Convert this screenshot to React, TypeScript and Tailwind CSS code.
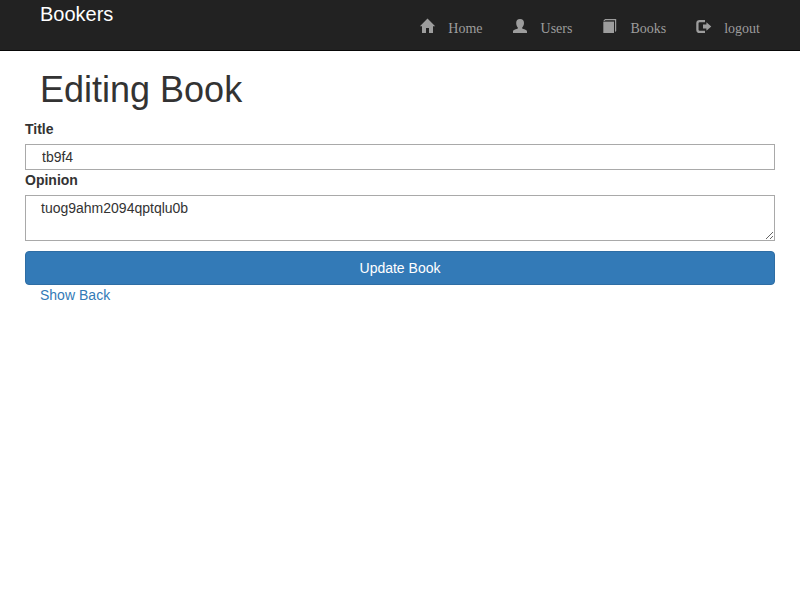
import type { ReactNode } from "react";

const links: { label: string; icon: ReactNode }[] = [
  {
    label: "Home",
    icon: <path d="M7.5 0.4 L15.2 8.2 H13 V15 H9 V10 H6 V15 H2 V8.2 H-0.1 Z" />,
  },
  {
    label: "Users",
    icon: (
      <path d="M7 1 C9.7 1 11 2.5 11 5 C11 7 10 8.6 9.2 9.4 V10.6 C10.4 11.2 14 12 14 13.4 V15 H0 V13.4 C0 12 3.6 11.2 4.8 10.6 V9.4 C4 8.6 3.2 7 3.2 5 C3.2 2.5 4.4 1 7 1 Z" />
    ),
  },
  {
    label: "Books",
    icon: (
      <>
        <path d="M1.3 3.6 H12 V15 H1.3 Z" />
        <path d="M1.3 3 L3 1 H14.2 V13 L13 14 V2.2 H3.4 L2.6 3 Z" />
      </>
    ),
  },
  {
    label: "logout",
    icon: (
      <>
        <path d="M9 3.1 H3.7 Q1.4 3.1 1.4 5.3 V11.7 Q1.4 13.9 3.7 13.9 H9" fill="none" stroke="currentColor" strokeWidth="2.3" />
        <path d="M7 6.5 H10.4 V4.2 L15.3 8.5 L10.4 12.8 V10.5 H7 Z" />
      </>
    ),
  },
];

export default function App() {
  return (
    <div className="min-h-screen bg-white font-['Liberation_Sans',Arial,sans-serif] text-sm leading-5 text-[#333]">
      <header className="flex h-[51px] justify-between border-b border-[#080808] bg-[#222] px-10">
        <a href="#" className="pt-1 text-xl leading-5 text-white">Bookers</a>
        <nav className="flex gap-[30px] font-['Liberation_Serif',serif] text-[#9d9d9d]">
          {links.map(({ label, icon }) => (
            <a key={label} href="#" className="flex gap-3.5 pt-[18px]">
              <svg className="h-4 w-3.5 overflow-visible" viewBox="0 0 14 16" fill="currentColor">
                {icon}
              </svg>
              <span className="pt-px">{label}</span>
            </a>
          ))}
        </nav>
      </header>
      <main className="px-[25px] pt-5">
        <h1 className="mb-2.5 pl-[15px] text-4xl leading-[38px] font-medium">Editing Book</h1>
        <form className="flex flex-col">
          <label htmlFor="title" className="mb-[5px] font-bold">Title</label>
          <input id="title" defaultValue="tb9f4" className="h-[26px] border border-[#a9a9a9] px-4 py-0.5" />
          <label htmlFor="opinion" className="mb-[5px] font-bold">Opinion</label>
          <textarea id="opinion" defaultValue="tuog9ahm2094qptqlu0b" className="h-[46px] resize border border-[#a9a9a9] px-[15px] py-0.5" />
          <button type="button" className="mt-2.5 h-[34px] rounded border border-[#2e6da4] bg-[#337ab7] text-white">
            Update Book
          </button>
        </form>
        <div className="flex gap-1 pl-[15px] text-[#337ab7]">
          <a href="#">Show</a>
          <a href="#">Back</a>
        </div>
      </main>
    </div>
  );
}
